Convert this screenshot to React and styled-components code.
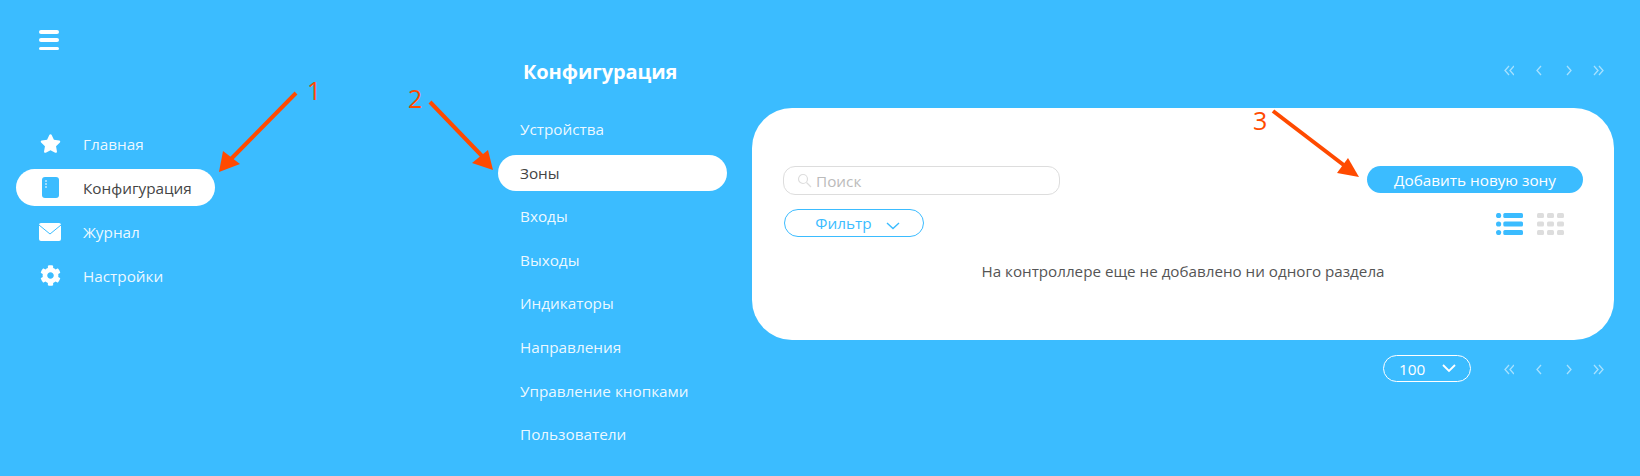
import React from 'react';
import styled, { createGlobalStyle } from 'styled-components';
import { FaCog, FaStar } from 'react-icons/fa';

const Global = createGlobalStyle`
  html, body {
    margin: 0;
    background: #3bbcff;
    font-family: 'Open Sans', 'Noto Sans', sans-serif;
    overflow: hidden;
  }
`;
const Page = styled.div`
  position: relative;
  display: flex;
  width: 1640px;
  height: 476px;
  background: #3bbcff;
  overflow: hidden;
`;
const Sidebar = styled.div`
  width: 498px;
  flex-shrink: 0;
  padding: 30px 0 0 16px;
  box-sizing: border-box;
`;
const Burger = styled.div`
  display: flex;
  flex-direction: column;
  justify-content: space-between;
  width: 20px;
  height: 20px;
  margin-left: 23px;
  margin-bottom: 75px;
  & span {
    display: block;
    height: 3.5px;
    border-radius: 2px;
    background: white;
  }
`;
const MainNav = styled.div`
  display: flex;
  flex-direction: column;
  gap: 7px;
`;
const MainItem = styled.div`
  display: flex;
  align-items: center;
  width: 199px;
  height: 37px;
  border-radius: 19px;
  font-size: 15.3px;
  color: ${(p) => (p.$active ? '#444' : 'rgba(255,255,255,.92)')};
  background: ${(p) => (p.$active ? 'white' : 'transparent')};
`;
const IconSlot = styled.div`
  display: flex;
  justify-content: center;
  align-items: center;
  width: 22px;
  margin: 0 22px 0 23px;
  color: white;
`;
const SubColumn = styled.div`
  width: 229px;
  flex-shrink: 0;
  margin-right: 25px;
  padding-top: 58px;
`;
const Title = styled.div`
  font-size: 20px;
  font-weight: 700;
  line-height: 27px;
  letter-spacing: -0.1px;
  color: white;
  margin: 0 0 26px 25px;
`;
const SubNav = styled.div`
  display: flex;
  flex-direction: column;
  gap: 7.6px;
`;
const SubItem = styled.div`
  display: flex;
  align-items: center;
  height: 36px;
  padding-left: 22px;
  border-radius: 18px;
  font-size: 15.3px;
  color: ${(p) => (p.$active ? '#444' : 'rgba(255,255,255,.92)')};
  background: ${(p) => (p.$active ? 'white' : 'transparent')};
`;
const Main = styled.div`
  width: 862px;
  flex-shrink: 0;
  display: flex;
  flex-direction: column;
`;
const PagerRow = styled.div`
  display: flex;
  justify-content: flex-end;
  height: 108px;
  padding: 65px 10px 0 0;
  box-sizing: border-box;
`;
const Pager = styled.div`
  display: flex;
  gap: 19px;
  height: 11px;
  margin-top: ${(p) => (p.$low ? '2px' : '0')};
`;
const Card = styled.div`
  height: 232px;
  box-sizing: border-box;
  padding: 58px 31px 0 31px;
  background: white;
  border-radius: 40px;
`;
const Row = styled.div`
  display: flex;
  justify-content: space-between;
  align-items: flex-start;
`;
const Search = styled.div`
  display: flex;
  align-items: center;
  gap: 4px;
  width: 277px;
  height: 29px;
  box-sizing: border-box;
  padding-left: 13px;
  border: 1.5px solid #ddd;
  border-radius: 12px;
  font-size: 15.3px;
  color: #bbb;
`;
const AddButton = styled.div`
  display: flex;
  justify-content: center;
  align-items: center;
  width: 216px;
  height: 27px;
  border-radius: 14px;
  background: #3bbcff;
  color: white;
  font-size: 15.3px;
`;
const FilterRow = styled(Row)`
  align-items: center;
  margin-top: 14px;
  padding: 0 19px 0 1px;
`;
const Filter = styled.div`
  display: flex;
  align-items: center;
  justify-content: center;
  gap: 14px;
  width: 140px;
  height: 28px;
  box-sizing: border-box;
  padding-left: 7px;
  border: 1px solid #3bbcff;
  border-radius: 14px;
  color: #3bbcff;
  font-size: 15.3px;
`;
const FilterChevron = styled.svg`
  margin-top: 5px;
`;
const ViewIcons = styled.div`
  display: flex;
  gap: 14px;
  padding-top: 2px;
`;
const Message = styled.div`
  margin-top: 24px;
  text-align: center;
  font-size: 15.2px;
  line-height: 20px;
  color: #555;
`;
const BottomRow = styled.div`
  display: flex;
  align-items: center;
  justify-content: flex-end;
  gap: 32px;
  margin-top: 15px;
  padding-right: 10px;
`;
const PageSize = styled.div`
  display: flex;
  align-items: center;
  gap: 17px;
  width: 88px;
  height: 27px;
  box-sizing: border-box;
  padding-left: 15px;
  border: 1px solid white;
  border-radius: 14px;
  color: white;
  font-size: 15.3px;
`;
const Overlay = styled.svg`
  position: absolute;
  inset: 0;
  pointer-events: none;
`;
const Mark = styled.text`
  font-family: 'Open Sans', sans-serif;
  font-size: 25px;
  fill: #ff4a00;
`;

const sections = [
  { name: 'Устройства' },
  { name: 'Зоны', active: true },
  { name: 'Входы' },
  { name: 'Выходы' },
  { name: 'Индикаторы' },
  { name: 'Направления' },
  { name: 'Управление кнопками' },
  { name: 'Пользователи' },
];

const Notebook = () => (
  <svg width="17" height="21" viewBox="0 0 17 21">
    <rect width="17" height="21" rx="3" fill="#3bbcff" />
    <path d="M3 4h2M3 7h2M3 10h2" stroke="white" strokeWidth="1" />
  </svg>
);

const Mail = () => (
  <svg width="22" height="18" viewBox="0 0 22 18">
    <rect width="22" height="18" rx="2" fill="white" />
    <path d="M0 2l11 9L22 2" fill="none" stroke="#3bbcff" strokeWidth="1" />
  </svg>
);

const Chevrons = ({ low }) => (
  <Pager $low={low}>
    {['M6 1L2 5.5 6 10M11 1L7 5.5 11 10', 'M8 1L4 5.5 8 10', 'M4 1L8 5.5 4 10', 'M1 1L5 5.5 1 10M6 1L10 5.5 6 10'].map((d) => (
      <svg key={d} width="11" height="11" viewBox="0 0 11 11">
        <path d={d} fill="none" stroke="white" strokeOpacity=".55" strokeWidth="1.3" />
      </svg>
    ))}
  </Pager>
);

const ListIcon = () => (
  <svg width="27" height="22" viewBox="0 0 27 22" fill="#3bbcff">
    <circle cx="2.6" cy="2.5" r="2.6" />
    <circle cx="2.6" cy="11" r="2.6" />
    <circle cx="2.6" cy="19.5" r="2.6" />
    <rect x="7.3" y="0" width="19.7" height="5" rx="1.5" />
    <rect x="7.3" y="8.5" width="19.7" height="5" rx="1.5" />
    <rect x="7.3" y="17" width="19.7" height="5" rx="1.5" />
  </svg>
);

const GridIcon = () => (
  <svg width="27" height="22" viewBox="0 0 27 22" fill="#ddd">
    {[0, 8.5, 17].map((y) =>
      [0, 10, 20].map((x) => <rect key={`${x}-${y}`} x={x} y={y} width="7" height="5" rx="1.5" />)
    )}
  </svg>
);

const App = () => {
  return (
    <Page>
      <Global />
      <Sidebar>
        <Burger>
          <span />
          <span />
          <span />
        </Burger>
        <MainNav>
          <MainItem>
            <IconSlot><FaStar size={21} /></IconSlot>
            Главная
          </MainItem>
          <MainItem $active>
            <IconSlot><Notebook /></IconSlot>
            Конфигурация
          </MainItem>
          <MainItem>
            <IconSlot><Mail /></IconSlot>
            Журнал
          </MainItem>
          <MainItem>
            <IconSlot><FaCog size={21} /></IconSlot>
            Настройки
          </MainItem>
        </MainNav>
      </Sidebar>
      <SubColumn>
        <Title>Конфигурация</Title>
        <SubNav>
          {sections.map((s) => (
            <SubItem key={s.name} $active={s.active}>{s.name}</SubItem>
          ))}
        </SubNav>
      </SubColumn>
      <Main>
        <PagerRow>
          <Chevrons />
        </PagerRow>
        <Card>
          <Row>
            <Search>
              <svg width="15" height="15" viewBox="0 0 15 15" fill="none" stroke="#ddd" strokeWidth="1.2">
                <circle cx="6" cy="6" r="4.5" />
                <path d="M9.5 9.5L14 14" />
              </svg>
              Поиск
            </Search>
            <AddButton>Добавить новую зону</AddButton>
          </Row>
          <FilterRow>
            <Filter>
              Фильтр
              <FilterChevron width="14" height="8" viewBox="0 0 14 8" fill="none" stroke="#3bbcff" strokeWidth="1.4">
                <path d="M1 1l6 5.5L13 1" />
              </FilterChevron>
            </Filter>
            <ViewIcons>
              <ListIcon />
              <GridIcon />
            </ViewIcons>
          </FilterRow>
          <Message>На контроллере еще не добавлено ни одного раздела</Message>
        </Card>
        <BottomRow>
          <PageSize>
            100
            <svg width="14" height="9" viewBox="0 0 14 9" fill="none" stroke="white" strokeWidth="1.8">
              <path d="M1 1l6 6 6-6" />
            </svg>
          </PageSize>
          <Chevrons low />
        </BottomRow>
      </Main>
      <Overlay width="1640" height="476" viewBox="0 0 1640 476">
        <path d="M296 93L230 160" stroke="#ff4a00" strokeWidth="4" />
        <path d="M219 172L223 151 240 164Z" fill="#ff4a00" />
        <path d="M430 102L483 157" stroke="#ff4a00" strokeWidth="4" />
        <path d="M493 170L472 163 488 150Z" fill="#ff4a00" />
        <path d="M1273 111L1345 166" stroke="#ff4a00" strokeWidth="4" />
        <path d="M1359 177L1337 173 1348 158Z" fill="#ff4a00" />
        <Mark x="307" y="100">1</Mark>
        <Mark x="408" y="108">2</Mark>
        <Mark x="1253" y="130">3</Mark>
      </Overlay>
    </Page>
  );
};

export default App;
